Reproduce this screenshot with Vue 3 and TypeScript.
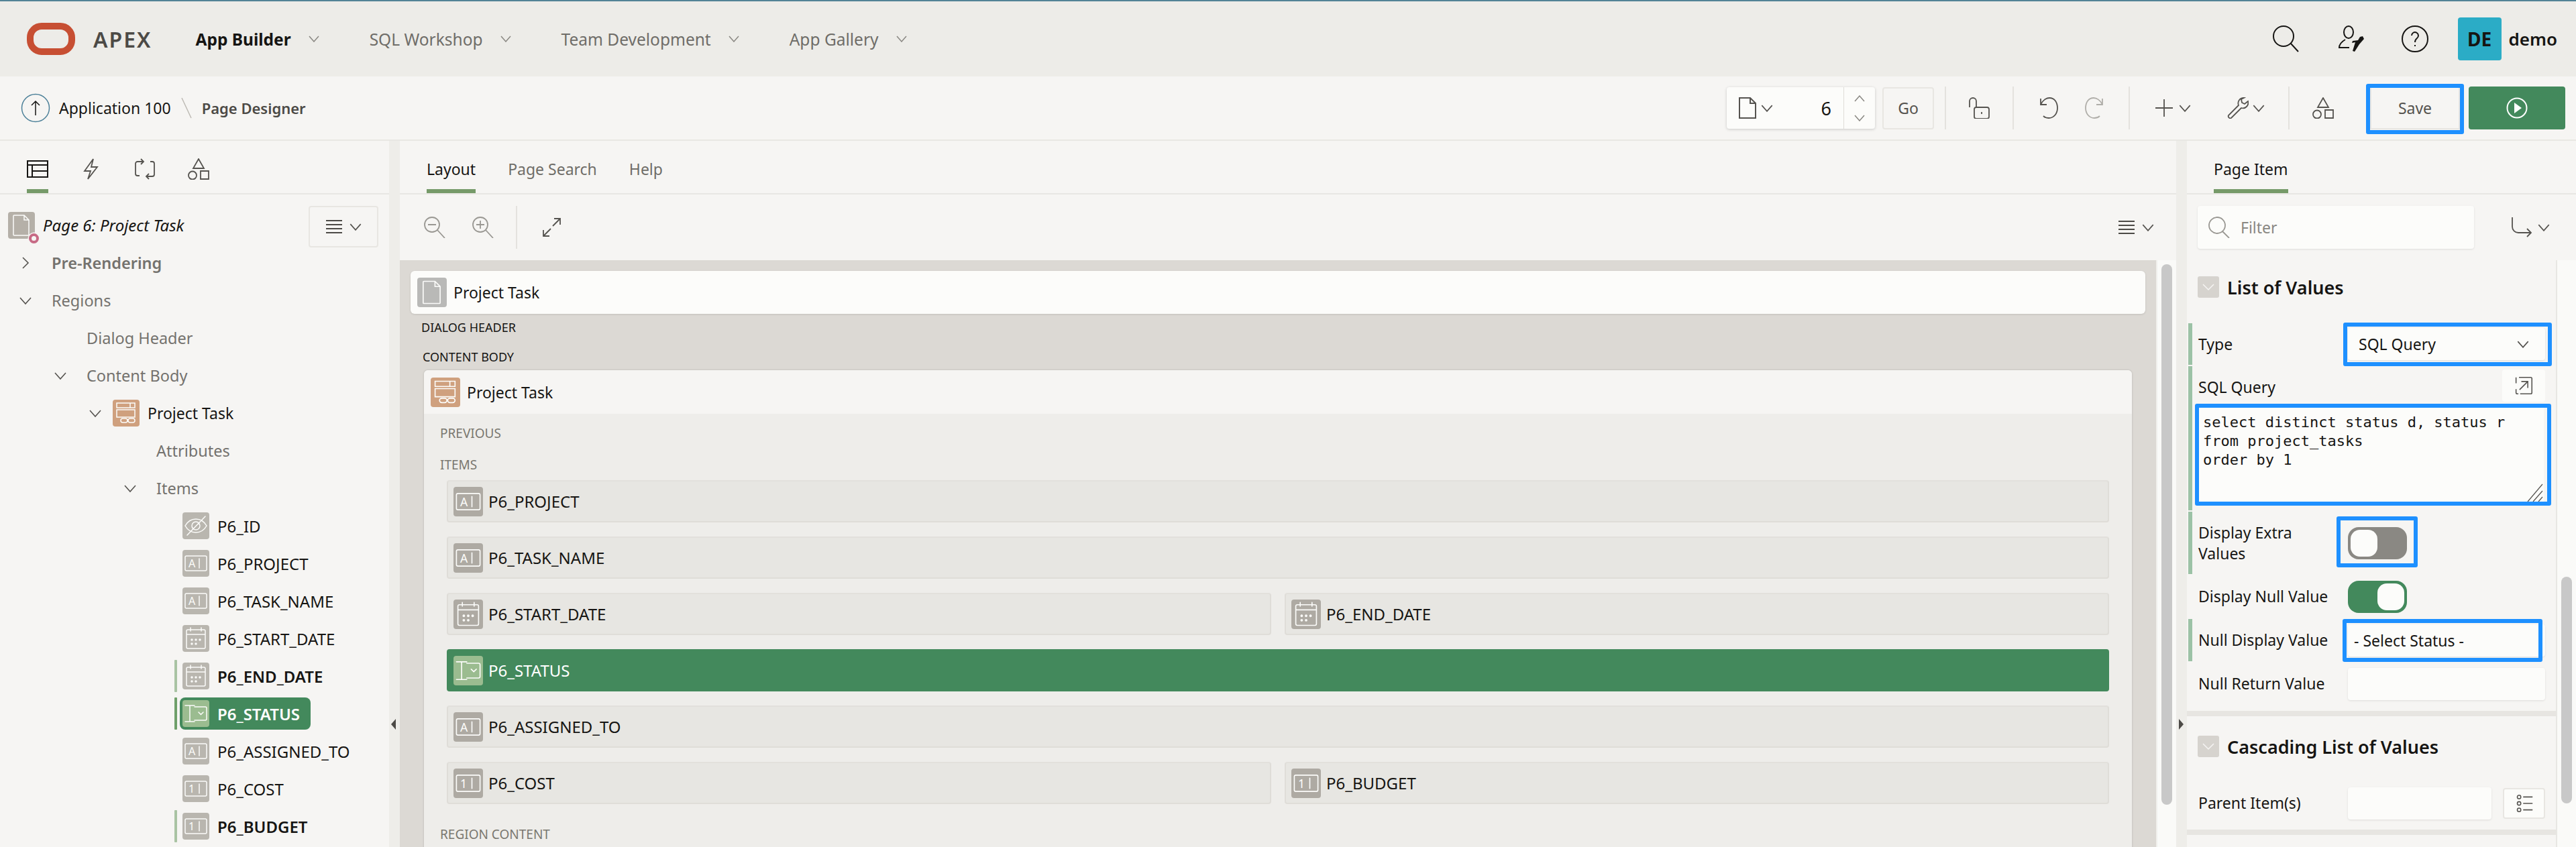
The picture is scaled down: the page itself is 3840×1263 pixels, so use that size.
<template>
  <div class="app">
    <header class="topbar">
      <svg class="logo" viewBox="0 0 72 48"><rect x="5" y="5" width="62" height="38" rx="17" /></svg>
      <span class="brand">APEX</span>
      <nav class="nav">
        <a v-for="(item, i) in navItems" :key="item" class="nav-item" :class="{ active: i === 0 }">
          {{ item }}
          <svg class="chev" viewBox="0 0 16 10"><path d="M1 1l7 8 7-8" /></svg>
        </a>
      </nav>
      <div class="top-actions">
        <svg class="top-ic" viewBox="0 0 40 40"><path d="M31 16a15 15 0 1 1-30 0a15 15 0 1 1 30 0M27 27l11 12" /></svg>
        <svg class="top-ic" viewBox="0 0 40 40">
          <path d="M24 10a7 9 0 1 1-14 0a7 9 0 1 1 14 0M12 21C7 24 3 28 3 33h15" />
          <path class="solid" d="M38 16l2 4-7 8-7 11-3-1 4-13-5 1 1-3 8-1 3-5z" />
        </svg>
        <svg class="top-ic" viewBox="0 0 40 40">
          <path d="M39 20a19 19 0 1 1-38 0a19 19 0 1 1 38 0M15 15a5 5 0 1 1 8 4c-2 1.5-3 3-3 6M20 29v2" />
        </svg>
        <span class="avatar">DE</span>
        <span class="username">demo</span>
      </div>
    </header>

    <div class="subbar">
      <svg class="back" viewBox="0 0 44 44">
        <circle cx="22" cy="22" r="20.5" />
        <path d="M22 33V12M16 18l6-6 6 6" />
      </svg>
      <span class="crumb">Application 100</span>
      <svg class="crumb-sep" viewBox="0 0 16 32"><path d="M1 1l14 30" /></svg>
      <span class="crumb strong">Page Designer</span>

      <div class="tools">
        <div class="page-go">
          <svg class="ic-page" viewBox="0 0 32 32"><path d="M4 1h16l8 8v22H4zM20 1v8h8" /></svg>
          <svg class="chev lg" viewBox="0 0 16 10"><path d="M1 1l7 8 7-8" /></svg>
          <span class="page-num">6</span>
          <div class="stepper">
            <svg class="chev" viewBox="0 0 16 10"><path d="M1 9l7-8 7 8" /></svg>
            <svg class="chev" viewBox="0 0 16 10"><path d="M1 1l7 8 7-8" /></svg>
          </div>
        </div>
        <button class="go">Go</button>
        <div class="seg" style="width: 101px">
          <svg class="ic" viewBox="0 0 32 32"><path d="M1 15V6a5 5 0 0 1 10 0v9M11 15h16a3 3 0 0 1 3 3v11a3 3 0 0 1-3 3H11a3 3 0 0 1-3-3V18a3 3 0 0 1 3-3zM19 22v3" /></svg>
        </div>
        <div class="seg gap-undo" style="width: 173px">
          <svg class="ic" viewBox="0 0 32 32"><path d="M4 2v9h9M4 11C7 4 13 1 17 1c8 0 12 7 12 15s-5 15-13 15c-3 0-6-1-8-3" /></svg>
          <svg class="ic redo" viewBox="0 0 32 32"><path d="M4 2v9h9M4 11C7 4 13 1 17 1c8 0 12 7 12 15s-5 15-13 15c-3 0-6-1-8-3" /></svg>
        </div>
        <div class="seg gap-create" style="width: 238px">
          <span class="pair">
            <svg class="ic" viewBox="0 0 32 32"><path d="M16 3v26M3 16h26" /></svg>
            <svg class="chev lg" viewBox="0 0 16 10"><path d="M1 1l7 8 7-8" /></svg>
          </span>
          <span class="pair">
            <svg class="ic" viewBox="0 0 32 32"><path d="M25 1a8 8 0 0 0-8 11L2 27a3 3 0 0 0 4 4l15-15a8 8 0 0 0 10-10l-5 4-4-2-1-5 4-2z" /></svg>
            <svg class="chev lg" viewBox="0 0 16 10"><path d="M1 1l7 8 7-8" /></svg>
          </span>
        </div>
        <div class="seg" style="width: 102px">
          <svg class="ic" viewBox="0 0 32 32"><path :d="icons.shapes" /></svg>
        </div>
        <div class="save-wrap">
          <button class="save">Save</button>
          <span class="mark save-mark"></span>
        </div>
        <button class="run">
          <svg viewBox="0 0 32 32"><circle cx="16" cy="16" r="14.5" /><path d="M12 8l11 8-11 8z" /></svg>
        </button>
      </div>
    </div>

    <main class="main">
      <aside class="left">
        <div class="tabs icon-tabs">
          <span v-for="(name, i) in leftTabs" :key="name" class="icon-tab" :class="{ active: i === 0 }">
            <svg class="ic" viewBox="0 0 32 32"><path :d="icons[name]" /></svg>
          </span>
        </div>
        <div class="tree">
          <button class="menu-btn tree-menu">
            <svg class="burger" viewBox="0 0 24 20"><path d="M0 1h24M0 7h24M0 13h24M0 19h24" /></svg>
            <svg class="chev lg" viewBox="0 0 16 10"><path d="M1 1l7 8 7-8" /></svg>
          </button>
          <div class="tree-root">
            <span class="type-box page-box">
              <svg viewBox="0 0 40 40"><path :d="typeIcons.page" /></svg>
              <i class="pin"></i>
            </span>
            <em>Page 6: Project Task</em>
          </div>
          <div v-for="row in treeRows" :key="row.label" class="tree-row" :style="{ paddingLeft: row.depth * 52 + 'px' }">
            <span class="toggle-slot">
              <svg v-if="row.open !== undefined" class="tree-chev" viewBox="0 0 20 20">
                <path :d="row.open ? 'M2 6l8 9 8-9' : 'M6 2l8 8-8 8'" />
              </svg>
            </span>
            <span class="node" :class="{ selected: row.selected, changed: row.changed, plain: !row.icon }">
              <span v-if="row.icon" class="type-box" :class="row.icon">
                <svg viewBox="0 0 40 40">
                  <path :d="typeIcons[row.icon]" />
                  <text v-if="row.icon === 'text'" x="9" y="26">A</text>
                  <text v-if="row.icon === 'num'" x="9" y="26">1</text>
                </svg>
              </span>
              <span class="node-label" :class="{ dark: row.icon, item: row.depth === 4, bold: row.bold || row.changed }">{{ row.label }}</span>
            </span>
          </div>
        </div>
      </aside>

      <div class="gutter"><i class="tri tri-left"></i></div>

      <section class="center">
        <div class="tabs text-tabs">
          <span v-for="(tab, i) in centerTabs" :key="tab" class="tab" :class="{ active: i === 0 }">{{ tab }}</span>
        </div>
        <div class="layout-tools">
          <svg class="ic soft" viewBox="0 0 32 32"><path :d="icons.zoomOut" /></svg>
          <svg class="ic soft zoom-in" viewBox="0 0 32 32"><path :d="icons.zoomIn" /></svg>
          <span class="vdiv"></span>
          <svg class="ic fit" viewBox="0 0 32 32"><path d="M20 3h9v9M29 3L18 14M13 29H4v-9M4 29l11-11" /></svg>
          <button class="menu-btn flat">
            <svg class="burger" viewBox="0 0 24 20"><path d="M0 1h24M0 7h24M0 13h24M0 19h24" /></svg>
            <svg class="chev lg" viewBox="0 0 16 10"><path d="M1 1l7 8 7-8" /></svg>
          </button>
        </div>
        <div class="canvas-wrap">
          <div class="canvas">
            <div class="page-card">
              <span class="type-box tile-box page-grey"><svg viewBox="0 0 40 40"><path :d="typeIcons.page" /></svg></span>
              Project Task
            </div>
            <div class="slot-label">DIALOG HEADER</div>
            <div class="slot-label body-label">CONTENT BODY</div>
            <div class="region-card">
              <div class="region-head">
                <span class="type-box tile-box region"><svg viewBox="0 0 40 40"><path :d="typeIcons.region" /></svg></span>
                Project Task
              </div>
              <div class="region-body">
                <div class="sub-label">PREVIOUS</div>
                <div class="sub-label">ITEMS</div>
                <div v-for="(tiles, r) in tileRows" :key="r" class="tile-row" :class="{ two: tiles.length === 2 }">
                  <div v-for="t in tiles" :key="t.label" class="tile" :class="{ selected: t.selected }">
                    <span class="type-box tile-box" :class="t.icon">
                      <svg viewBox="0 0 40 40">
                        <path :d="typeIcons[t.icon]" />
                        <text v-if="t.icon === 'text'" x="9" y="26">A</text>
                        <text v-if="t.icon === 'num'" x="9" y="26">1</text>
                      </svg>
                    </span>
                    {{ t.label }}
                  </div>
                </div>
                <div class="sub-label region-content">REGION CONTENT</div>
              </div>
            </div>
          </div>
          <div class="scroll-strip"><i class="thumb canvas-thumb"></i></div>
        </div>
      </section>

      <div class="gutter"><i class="tri tri-right"></i></div>

      <aside class="right">
        <div class="tabs">
          <span class="tab active">Page Item</span>
        </div>
        <div class="filter-bar">
          <div class="filter">
            <svg class="ic soft" viewBox="0 0 32 32"><path d="M25 13a12 12 0 1 1-24 0a12 12 0 1 1 24 0M21 22l10 10" /></svg>
            <span>Filter</span>
          </div>
          <svg class="ic route" viewBox="0 0 32 32"><path d="M2 1v14a9 9 0 0 0 9 9h19M24 18l6 6-6 6" /></svg>
          <svg class="chev lg" viewBox="0 0 16 10"><path d="M1 1l7 8 7-8" /></svg>
        </div>
        <div class="props-wrap">
          <div class="props">
            <div class="group-head first">
              <span class="collapse"><svg viewBox="0 0 20 12"><path d="M2 2l8 8 8-8" /></svg></span>
              List of Values
            </div>

            <div class="prop marked type-row">
              <label>Type</label>
              <div class="field select">
                SQL Query
                <svg class="chev lg" viewBox="0 0 16 10"><path d="M1 1l7 8 7-8" /></svg>
                <span class="mark select-mark"></span>
              </div>
            </div>

            <div class="prop marked sql-row">
              <div class="sql-head">
                <label>SQL Query</label>
                <button class="expand">
                  <svg class="ic" viewBox="0 0 32 32"><path d="M8 2h20a2 2 0 0 1 2 2v24a2 2 0 0 1-2 2H10M3 2v10M3 22v6a2 2 0 0 0 2 2h2M9 23l14-14M12 9h11v11" /></svg>
                </button>
              </div>
              <div class="code">
                <pre>select distinct status d, status r
from project_tasks
order by 1</pre>
                <svg class="grip" viewBox="0 0 24 28"><path d="M1 27L23 1M9 27L23 11M17 27l6-7" /></svg>
                <span class="mark code-mark"></span>
              </div>
            </div>

            <div class="prop marked extra-row">
              <label>Display Extra<br />Values</label>
              <div class="switch-cell">
                <span class="switch off"><i></i><span class="mark switch-mark"></span></span>
              </div>
            </div>

            <div class="prop null-row">
              <label>Display Null Value</label>
              <div class="switch-cell"><span class="switch on"><i></i></span></div>
            </div>

            <div class="prop marked text-row">
              <label>Null Display Value</label>
              <div class="field null-field">
                - Select Status -
                <span class="mark null-mark"></span>
              </div>
            </div>

            <div class="prop text-row return-row">
              <label>Null Return Value</label>
              <div class="field"></div>
            </div>

            <div class="group-sep"></div>

            <div class="group-head">
              <span class="collapse"><svg viewBox="0 0 20 12"><path d="M2 2l8 8 8-8" /></svg></span>
              Cascading List of Values
            </div>

            <div class="prop parent-row">
              <label>Parent Item(s)</label>
              <div class="field narrow"></div>
              <button class="list-btn">
                <svg class="ic" viewBox="0 0 32 32"><path d="M10 5a3 3 0 1 1-6 0a3 3 0 1 1 6 0M10 16a3 3 0 1 1-6 0a3 3 0 1 1 6 0M10 27a3 3 0 1 1-6 0a3 3 0 1 1 6 0M14 5h16M14 16h16M14 27h16" /></svg>
              </button>
            </div>

            <div class="group-sep last"></div>
          </div>
          <div class="scroll-strip props-strip"><i class="thumb props-thumb"></i></div>
        </div>
      </aside>
    </main>
  </div>
</template>

<script setup lang="ts">
type TypeIcon = "text" | "num" | "date" | "select" | "hidden" | "page" | "region";

interface TreeRow {
  label: string;
  depth: number;
  open?: boolean;
  icon?: TypeIcon;
  bold?: boolean;
  changed?: boolean;
  selected?: boolean;
}

interface Tile {
  label: string;
  icon: TypeIcon;
  selected?: boolean;
}

const navItems = ["App Builder", "SQL Workshop", "Team Development", "App Gallery"];
const leftTabs = ["layout", "bolt", "loop", "shapes"];
const centerTabs = ["Layout", "Page Search", "Help"];

const icons: Record<string, string> = {
  layout: "M1 4h30v24H1zM1 10h30M8 10v18M8 19h23",
  bolt: "M19 1L6 19h9l-4 12 14-18h-9z",
  loop: "M14 5H5a3 3 0 0 0-3 3v15a3 3 0 0 0 3 3h3M10 1l4 4-4 4M18 27h9a3 3 0 0 0 3-3V8a3 3 0 0 0-3-3h-3M22 31l-4-4 4-4",
  shapes: "M16 1l8 14H8zM13 25.5a6 6 0 1 1-12 0a6 6 0 1 1 12 0M19 19h12v12H19z",
  zoomOut: "M23 12a11 11 0 1 1-22 0a11 11 0 1 1 22 0M20 20l11 12M6 12h12",
  zoomIn: "M23 12a11 11 0 1 1-22 0a11 11 0 1 1 22 0M20 20l11 12M6 12h12M12 6v12",
};

const dots = "M13 22a1 1 0 1 0 2 0a1 1 0 1 0-2 0M19 22a1 1 0 1 0 2 0a1 1 0 1 0-2 0M25 22a1 1 0 1 0 2 0a1 1 0 1 0-2 0M13 28a1 1 0 1 0 2 0a1 1 0 1 0-2 0M19 28a1 1 0 1 0 2 0a1 1 0 1 0-2 0";

const typeIcons: Record<TypeIcon, string> = {
  text: "M6 9h28a2 2 0 0 1 2 2v18a2 2 0 0 1-2 2H6a2 2 0 0 1-2-2V11a2 2 0 0 1 2-2zM25 13v14",
  num: "M6 9h28a2 2 0 0 1 2 2v18a2 2 0 0 1-2 2H6a2 2 0 0 1-2-2V11a2 2 0 0 1 2-2zM25 13v14",
  date: "M8 7h24a2 2 0 0 1 2 2v24a2 2 0 0 1-2 2H8a2 2 0 0 1-2-2V9a2 2 0 0 1 2-2zM6 14h28M12 4v5M28 4v5" + dots,
  select: "M4 8h14M11 8v24M4 32h14M18 10h16a2 2 0 0 1 2 2v16a2 2 0 0 1-2 2H18M24 18l3.5 3.5L31 18",
  hidden: "M4 20c4-7 10-10 16-10s12 3 16 10c-4 7-10 10-16 10S8 27 4 20zM26 20a6 6 0 1 1-12 0a6 6 0 1 1 12 0M34 6L7 34",
  page: "M9 5h15l7 7v22a1 1 0 0 1-1 1H9a1 1 0 0 1-1-1V6a1 1 0 0 1 1-1zM24 5v7h7",
  region: "M6 5h27v7H6zM26 5v7M6 15h27v11H6zM15 28h4a3 3 0 0 1 0 6h-4a3 3 0 0 1 0-6zM26 28h4a3 3 0 0 1 0 6h-4a3 3 0 0 1 0-6z",
};

const treeRows: TreeRow[] = [
  { label: "Pre-Rendering", depth: 0, open: false, bold: true },
  { label: "Regions", depth: 0, open: true },
  { label: "Dialog Header", depth: 1 },
  { label: "Content Body", depth: 1, open: true },
  { label: "Project Task", depth: 2, open: true, icon: "region" },
  { label: "Attributes", depth: 3 },
  { label: "Items", depth: 3, open: true },
  { label: "P6_ID", depth: 4, icon: "hidden" },
  { label: "P6_PROJECT", depth: 4, icon: "text" },
  { label: "P6_TASK_NAME", depth: 4, icon: "text" },
  { label: "P6_START_DATE", depth: 4, icon: "date" },
  { label: "P6_END_DATE", depth: 4, icon: "date", changed: true },
  { label: "P6_STATUS", depth: 4, icon: "select", changed: true, selected: true },
  { label: "P6_ASSIGNED_TO", depth: 4, icon: "text" },
  { label: "P6_COST", depth: 4, icon: "num" },
  { label: "P6_BUDGET", depth: 4, icon: "num", changed: true },
];

const tileRows: Tile[][] = [
  [{ label: "P6_PROJECT", icon: "text" }],
  [{ label: "P6_TASK_NAME", icon: "text" }],
  [
    { label: "P6_START_DATE", icon: "date" },
    { label: "P6_END_DATE", icon: "date" },
  ],
  [{ label: "P6_STATUS", icon: "select", selected: true }],
  [{ label: "P6_ASSIGNED_TO", icon: "text" }],
  [
    { label: "P6_COST", icon: "num" },
    { label: "P6_BUDGET", icon: "num" },
  ],
];
</script>

<style>
html,
body {
  margin: 0;
  background: #f6f5f3;
}
</style>

<style scoped>
.app {
  width: 3840px;
  height: 1263px;
  overflow: hidden;
  display: flex;
  flex-direction: column;
  font-family: "Noto Sans", "Open Sans", sans-serif;
  font-size: 23px;
  color: #161513;
  background: #f6f5f3;
}

svg {
  display: block;
  flex: none;
  fill: none;
  stroke: currentColor;
}

button {
  font: inherit;
  padding: 0;
  margin: 0;
  cursor: pointer;
}

/* top bar */
.topbar {
  height: 114px;
  flex: none;
  display: flex;
  align-items: center;
  box-sizing: border-box;
  padding: 0 28px 0 40px;
  border-top: 2px solid #538396;
  background: #edece8;
}

.logo {
  width: 72px;
  height: 48px;
  stroke: #c74f33;
  stroke-width: 10;
}

.brand {
  margin-left: 27px;
  font-size: 32px;
  font-weight: 600;
  letter-spacing: 2px;
  color: #4c4a46;
}

.nav {
  display: flex;
  margin-left: 65px;
  gap: 75px;
}

.nav-item {
  display: flex;
  align-items: center;
  gap: 26px;
  font-size: 24.5px;
  color: #6f6d68;
}

.nav-item.active {
  color: #161513;
  font-weight: 700;
}

.chev {
  width: 16px;
  height: 10px;
  color: #8a8883;
  stroke-width: 1.5;
}

.chev.lg {
  color: #55534f;
  width: 18px;
  height: 11px;
}

.top-actions {
  margin-left: auto;
  display: flex;
  align-items: center;
}

.top-ic {
  width: 40px;
  height: 40px;
  margin-right: 56px;
  stroke-width: 2;
  color: #161513;
}

.top-ic .solid {
  fill: #161513;
  stroke: none;
}

.top-ic:nth-child(3) {
  margin-right: 44px;
}

.avatar {
  width: 65px;
  height: 64px;
  display: flex;
  align-items: center;
  justify-content: center;
  border-radius: 4px;
  background: #2bacc6;
  font-size: 28px;
  font-weight: 700;
}

.username {
  margin-left: 11px;
  font-size: 26px;
  font-weight: 600;
}

/* second bar */
.subbar {
  height: 96px;
  flex: none;
  display: flex;
  align-items: center;
  box-sizing: border-box;
  padding: 0 16px 0 31px;
  border-bottom: 2px solid #e8e7e3;
}

.back {
  width: 44px;
  height: 44px;
  stroke: #4d8199;
  stroke-width: 1.5;
}

.back path {
  stroke: #161513;
}

.crumb {
  margin-left: 13px;
}

.crumb.strong {
  margin-left: 15px;
  font-size: 22px;
  font-weight: 600;
  color: #4c4a46;
}

.crumb-sep {
  width: 16px;
  height: 32px;
  margin-left: 15px;
  stroke: #bdbab4;
  stroke-width: 1.5;
}

.tools {
  margin-left: auto;
  display: flex;
  align-items: center;
}

.page-go {
  width: 221px;
  height: 62px;
  display: flex;
  align-items: center;
  border-radius: 4px;
  background: #fcfcfa;
  box-shadow: 0 1px 4px rgba(0, 0, 0, 0.18);
}

.ic-page {
  width: 32px;
  height: 32px;
  margin-left: 15px;
  stroke: #55534f;
  stroke-width: 2;
}

.page-go .chev.lg {
  margin-left: 4px;
}

.page-num {
  margin-left: auto;
  margin-right: 18px;
  font-size: 27px;
}

.stepper {
  width: 46px;
  height: 100%;
  display: flex;
  flex-direction: column;
  align-items: center;
  justify-content: center;
  gap: 19px;
  border-left: 1px solid #dfddd8;
}

.go {
  width: 77px;
  height: 63px;
  margin-left: 11px;
  border: 2px solid #e8e6e2;
  border-radius: 4px;
  background: transparent;
  color: #55534f;
}

.seg {
  height: 64px;
  display: flex;
  align-items: center;
  justify-content: center;
  box-sizing: border-box;
  border-left: 2px solid #e4e2de;
}

.seg:nth-child(3) {
  margin-left: 16px;
}

.gap-undo {
  gap: 36px;
}

.gap-create {
  gap: 54px;
}

.pair {
  display: flex;
  align-items: center;
  gap: 6px;
}

.ic {
  width: 32px;
  height: 32px;
  color: #55534f;
  stroke-width: 1.8;
}

.ic.redo {
  transform: scaleX(-1);
  color: #b0aea9;
}

.save-wrap {
  position: relative;
  margin-left: 20px;
}

.save {
  width: 134px;
  height: 64px;
  display: block;
  border: 2px solid #e8e6e2;
  background: #f6f5f3;
  color: #55534f;
}

.mark {
  position: absolute;
  box-sizing: border-box;
  border: 6px solid #1e90ff;
  border-radius: 3px;
  pointer-events: none;
}

.save-mark {
  inset: -4px -6px -7px -6px;
}

.run {
  width: 144px;
  height: 64px;
  margin-left: 13px;
  display: flex;
  align-items: center;
  justify-content: center;
  border: none;
  border-radius: 4px;
  background: #43895c;
}

.run svg {
  width: 32px;
  height: 32px;
  stroke: #fff;
  stroke-width: 2;
}

.run path {
  fill: #fff;
  stroke: none;
}

/* panels */
.main {
  flex: 1;
  min-height: 0;
  display: flex;
}

.left {
  width: 580px;
  flex: none;
}

.gutter {
  width: 16px;
  flex: none;
  position: relative;
  background: #eeede9;
}

.tri {
  position: absolute;
  top: 862px;
  border-top: 8px solid transparent;
  border-bottom: 8px solid transparent;
}

.tri-left {
  left: 3px;
  border-right: 7px solid #4c4a46;
}

.tri-right {
  left: 4px;
  border-left: 7px solid #4c4a46;
}

.center {
  flex: 1;
  min-width: 0;
  display: flex;
  flex-direction: column;
}

.right {
  width: 580px;
  flex: none;
  display: flex;
  flex-direction: column;
}

.tabs {
  height: 80px;
  flex: none;
  display: flex;
  gap: 48px;
  padding-left: 40px;
  box-sizing: border-box;
  border-bottom: 2px solid #e8e7e3;
}

.tab,
.icon-tab {
  display: flex;
  align-items: center;
  padding-top: 12px;
  border-bottom: 6px solid transparent;
  color: #6f6d68;
}

.tab.active,
.icon-tab.active {
  color: #161513;
  border-bottom-color: #769a69;
}

.icon-tab.active .ic {
  color: #161513;
  stroke-width: 2;
}

.ic.soft {
  color: #9a9893;
}

/* tree */
.tree {
  position: relative;
  padding-top: 17px;
}

.tree-menu {
  position: absolute;
  top: 17px;
  right: 16px;
}

.menu-btn {
  width: 104px;
  height: 62px;
  display: flex;
  align-items: center;
  justify-content: center;
  gap: 11px;
  border: 2px solid #e8e6e2;
  border-radius: 4px;
  background: transparent;
}

.menu-btn.flat {
  margin-left: auto;
  margin-right: 8px;
  border-color: transparent;
}

.burger {
  width: 24px;
  height: 20px;
  stroke: #4c4a46;
  stroke-width: 2;
}

.tree-root {
  height: 57px;
  display: flex;
  align-items: center;
  gap: 12px;
  padding-left: 12px;
}

.tree-root em {
  font-size: 24px;
}

.type-box {
  width: 40px;
  height: 40px;
  flex: none;
  position: relative;
  border-radius: 4px;
  background: #b9b6af;
}

.type-box svg {
  width: 100%;
  height: 100%;
  stroke: #fcfcfa;
  stroke-width: 1.5;
  stroke-linecap: round;
}

.type-box text {
  fill: #fcfcfa;
  stroke: none;
  font-size: 16px;
  font-family: "Noto Sans", sans-serif;
}

.type-box.region {
  background: #cfa07e;
}

.page-box {
  background: #b5b0a8;
}

.pin {
  position: absolute;
  right: -6px;
  bottom: -7px;
  width: 7px;
  height: 7px;
  border: 4px solid #c76a85;
  border-radius: 50%;
  background: #f6f5f3;
  box-shadow: 0 0 0 1.5px #f6f5f3;
}

.tree-row {
  height: 56px;
  display: flex;
  align-items: center;
  font-size: 23.5px;
  color: #74726e;
}

.toggle-slot {
  width: 64px;
  flex: none;
  display: flex;
  justify-content: center;
  padding-left: 12px;
  box-sizing: border-box;
}

.tree-chev {
  width: 20px;
  height: 20px;
  color: #55534f;
  stroke-width: 1.6;
}

.node {
  position: relative;
  height: 48px;
  display: flex;
  align-items: center;
  gap: 12px;
  padding: 0 16px 0 0;
  border-radius: 8px;
}

.node.plain {
  padding-left: 13px;
}

.node.changed::before {
  content: "";
  position: absolute;
  left: -12px;
  top: 0;
  bottom: 0;
  width: 4px;
  border-radius: 1px;
  background: #a9c3a3;
}

.node.selected {
  margin-left: -4px;
  padding-left: 4px;
  background: #43895c;
  color: #fff;
}

.node.selected::before {
  left: -8px;
  background: #6f9f6a;
}

.node.selected .type-box {
  background: #9bbc90;
}

.node-label.dark {
  color: #161513;
  font-size: 23px;
}

.node-label.item {
  font-size: 24px;
}

.node.selected .node-label {
  color: #fff;
}

.node-label.bold {
  font-weight: 600;
}

/* layout editor */
.layout-tools {
  height: 98px;
  flex: none;
  display: flex;
  align-items: center;
  padding-left: 36px;
}

.zoom-in {
  margin-left: 40px;
}

.vdiv {
  width: 2px;
  height: 64px;
  margin-left: 33px;
  background: #e4e2de;
}

.ic.fit {
  margin-left: 35px;
}

.canvas-wrap {
  flex: 1;
  min-height: 0;
  display: flex;
}

.canvas {
  flex: 1;
  min-width: 0;
  box-sizing: border-box;
  padding: 16px 16px 0;
  background: #dcd9d4;
}

.scroll-strip {
  width: 30px;
  flex: none;
  box-sizing: border-box;
  padding-left: 8px;
  background: #fafaf8;
  border-left: 2px solid #f0efec;
}

.thumb {
  display: block;
  width: 16px;
  border-radius: 8px;
  background: #c8c8c8;
}

.canvas-thumb {
  height: 806px;
  margin-top: 6px;
  margin-left: -2px;
}

.page-card {
  height: 64px;
  display: flex;
  align-items: center;
  gap: 10px;
  padding-left: 10px;
  box-sizing: border-box;
  border-radius: 6px;
  background: #fcfcfa;
  box-shadow: 0 1px 3px rgba(0, 0, 0, 0.12);
}

.tile-box {
  width: 44px;
  height: 44px;
}

.page-grey {
  background: #b9b9b7;
}

.slot-label {
  height: 40px;
  display: flex;
  align-items: center;
  padding-left: 16px;
  font-size: 18px;
}

.body-label {
  margin-top: 3px;
  padding-left: 18px;
  height: 41px;
}

.region-card {
  margin: 0 20px;
  border-radius: 6px 6px 0 0;
  box-shadow: 0 0 3px rgba(0, 0, 0, 0.18);
  background: #eeedea;
  overflow: hidden;
}

.region-head {
  height: 65px;
  display: flex;
  align-items: center;
  gap: 10px;
  padding-left: 10px;
  background: #f6f5f3;
}

.region-body {
  padding: 5px 34px 0;
}

.sub-label {
  height: 47px;
  display: flex;
  align-items: center;
  margin-left: -10px;
  font-size: 19px;
  color: #79776f;
}

.tile-row {
  display: grid;
  grid-template-columns: 1fr;
  gap: 20px;
  margin-bottom: 21px;
}

.tile-row.two {
  grid-template-columns: 1fr 1fr;
}

.tile {
  height: 63px;
  display: flex;
  align-items: center;
  gap: 8px;
  padding-left: 10px;
  box-sizing: border-box;
  border: 2px solid #dfddd8;
  border-top-color: #e2e0dc;
  border-radius: 4px;
  background: #e7e6e2;
  font-size: 24px;
}

.tile .type-box {
  margin-left: -2px;
  background: #aeaaa3;
}

.tile.selected {
  border-color: #43895c;
  background: #43895c;
  color: #fff;
}

.tile.selected .type-box {
  background: #9bbc90;
}

.region-content {
  margin-top: 14px;
}

/* property editor */
.filter-bar {
  height: 98px;
  flex: none;
  display: flex;
  align-items: center;
  padding-left: 16px;
}

.filter {
  width: 412px;
  height: 64px;
  display: flex;
  align-items: center;
  gap: 16px;
  padding-left: 16px;
  box-sizing: border-box;
  border-radius: 4px;
  background: #fcfcfa;
  box-shadow: 0 1px 3px rgba(0, 0, 0, 0.1);
  color: #8a8883;
}

.ic.route {
  margin-left: 55px;
}

.filter-bar .chev.lg {
  margin-left: 8px;
}

.props-wrap {
  flex: 1;
  min-height: 0;
  display: flex;
}

.props {
  width: 552px;
  flex: none;
  box-sizing: border-box;
  border-right: 2px solid #e8e7e3;
}

.props-strip {
  flex: 1;
  padding-left: 6px;
  border-left: none;
}

.props-thumb {
  height: 338px;
  margin-top: 472px;
}

.group-head {
  height: 90px;
  display: flex;
  align-items: center;
  gap: 12px;
  padding-left: 16px;
  box-sizing: border-box;
  font-size: 27px;
  font-weight: 600;
}

.group-head.first {
  height: 80px;
  margin-bottom: 14px;
}

.collapse {
  width: 32px;
  height: 32px;
  display: flex;
  align-items: center;
  justify-content: center;
  border-radius: 3px;
  background: #d6d3ce;
  color: #f6f5f3;
}

.collapse svg {
  width: 20px;
  height: 12px;
  stroke-width: 1.5;
}

.prop {
  display: flex;
  align-items: center;
  box-sizing: border-box;
  margin-left: 2px;
  padding-left: 9px;
  border-left: 6px solid transparent;
}

.prop.marked {
  border-left-color: #9cc2a6;
}

.prop label {
  width: 223px;
  flex: none;
  line-height: 31px;
}

.type-row {
  height: 62px;
  margin-bottom: 2px;
}

.field {
  position: relative;
  width: 294px;
  height: 48px;
  display: flex;
  align-items: center;
  padding-left: 16px;
  box-sizing: border-box;
  border-radius: 4px;
  background: #fcfcfa;
  box-shadow: 0 1px 3px rgba(0, 0, 0, 0.1);
}

.field.select {
  justify-content: space-between;
  padding-right: 24px;
}

.field.null-field {
  padding-left: 9px;
}

.select-mark {
  inset: -8px -10px -9px -7px;
}

.sql-row {
  height: 215px;
  display: block;
  margin-bottom: 2px;
}

.sql-head {
  height: 54px;
  display: flex;
  align-items: center;
  justify-content: space-between;
  padding-right: 16px;
}

.sql-head label {
  margin-top: 8px;
}

.expand {
  width: 64px;
  height: 48px;
  margin-top: 4px;
  display: flex;
  align-items: center;
  justify-content: center;
  border: none;
  border-radius: 4px;
  background: #fcfcfa;
}

.expand .ic {
  width: 28px;
  height: 28px;
}

.code {
  position: relative;
  width: 516px;
  height: 150px;
  margin: 3px 0 0 -1px;
  box-sizing: border-box;
  padding: 13px 0 0 8px;
  background: #fcfcfa;
}

.code pre {
  margin: 0;
  font-family: "DejaVu Sans Mono", "Liberation Mono", monospace;
  font-size: 22px;
  line-height: 28px;
}

.grip {
  position: absolute;
  right: 1px;
  bottom: 4px;
  width: 24px;
  height: 28px;
  stroke: #55534f;
  stroke-width: 1.2;
}

.code-mark {
  inset: -1px -11px -1px -4px;
}

.extra-row {
  height: 93px;
}

.switch-cell {
  width: 294px;
}

.switch {
  position: relative;
  display: flex;
  width: 88px;
  height: 48px;
  padding: 4px;
  box-sizing: border-box;
  border-radius: 16px;
}

.switch i {
  width: 40px;
  height: 40px;
  border-radius: 14px;
  background: #fcfcfa;
}

.switch.off {
  background: #8a8883;
}

.switch.on {
  justify-content: flex-end;
  background: #43895c;
}

.switch-mark {
  inset: -16px -16px -12px -17px;
}

.null-row {
  height: 67px;
}

.text-row {
  height: 63px;
}

.return-row {
  margin-top: 2px;
}

.null-mark {
  inset: -8px 4px -8px -8px;
}

.group-sep {
  height: 8px;
  margin-top: 9px;
  background: #e7e5e1;
}

.group-sep.last {
  margin-top: 0;
}

.parent-row {
  height: 79px;
}

.field.narrow {
  width: 214px;
}

.list-btn {
  width: 63px;
  height: 46px;
  margin-left: 17px;
  display: flex;
  align-items: center;
  justify-content: center;
  border: 2px solid #e8e6e2;
  border-radius: 4px;
  background: #fcfcfa;
}

.list-btn .ic {
  width: 28px;
  height: 28px;
}
</style>
